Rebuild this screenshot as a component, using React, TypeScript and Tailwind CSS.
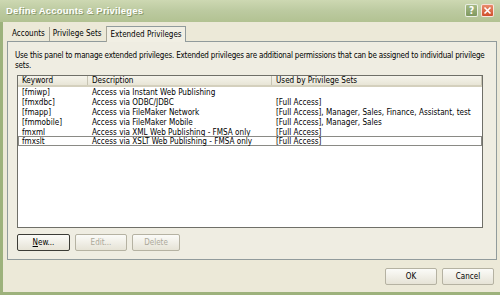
import React from "react";

const rows = [
  ["[fmiwp]", "Access via Instant Web Publishing", ""],
  ["[fmxdbc]", "Access via ODBC/JDBC", "[Full Access]"],
  ["[fmapp]", "Access via FileMaker Network", "[Full Access], Manager, Sales, Finance, Assistant, test"],
  ["[fmmobile]", "Access via FileMaker Mobile", "[Full Access], Manager, Sales"],
  ["fmxml", "Access via XML Web Publishing - FMSA only", "[Full Access]"],
  ["fmxslt", "Access via XSLT Web Publishing - FMSA only", "[Full Access]"],
];

function Btn({ label, w, disabled, def, u }: { label: string; w: string; disabled?: boolean; def?: boolean; u?: number }) {
  const text =
    u !== undefined ? (
      <>
        {label.slice(0, u)}
        <span className="underline">{label[u]}</span>
        {label.slice(u + 1)}
      </>
    ) : (
      label
    );
  return (
    <div
      className={
        "h-[17px] flex items-center justify-center rounded-[2px] text-[8px] bg-gradient-to-b from-[#fbfbf8] to-[#e6e3d6] " +
        w +
        " " +
        (def ? "border border-[#3c3c36] " : "border border-[#b5b2a2] ") +
        (disabled ? "text-[#aca899]" : "text-black")
      }
    >
      {text}
    </div>
  );
}

export default function App() {
  return (
    <div className="w-[500px] h-[295px] flex flex-col bg-[#9db27c] font-['DejaVu_Sans_Condensed','DejaVu_Sans',sans-serif] overflow-hidden">
      <div className="h-[22px] shrink-0 flex items-center pl-[6px] pr-[6px] bg-gradient-to-b from-[#cdd8b2] via-[#bccaa0] to-[#b2c292]">
        <span className="text-[9.5px] font-bold text-white [text-shadow:1px_1px_0_#8a9a6c] font-['Liberation_Sans',Arial,sans-serif] tracking-[0.2px]">
          Define Accounts &amp; Privileges
        </span>
        <div className="ml-auto flex gap-[3px] mt-[-1px]">
          <div className="w-[13px] h-[13px] rounded-[2px] border border-white/80 bg-gradient-to-b from-[#a5ba85] to-[#7f9860] text-white text-[10px] font-bold flex items-center justify-center leading-none">
            ?
          </div>
          <div className="w-[13px] h-[13px] rounded-[2px] border border-white/80 bg-gradient-to-b from-[#e88a6a] to-[#cf4e2a] flex items-center justify-center">
            <svg width="9" height="9" viewBox="0 0 9 9">
              <path d="M1.5 1.5 L7.5 7.5 M7.5 1.5 L1.5 7.5" stroke="white" strokeWidth="1.6" />
            </svg>
          </div>
        </div>
      </div>
      <div className="flex-1 ml-[3px] mb-[3px] bg-[#ece9d8] flex flex-col">
        <div className="pt-[3px] pl-[4px] pr-[3px] flex flex-col">
          <div className="h-[16px] flex items-end text-[8px] text-black">
            <div className="h-[14px] flex items-center pl-[5px] pr-[4px] border-r border-[#a9a697]">Accounts</div>
            <div className="h-[14px] flex items-center pl-[3px] pr-[4px]">Privilege Sets</div>
            <div className="h-[16px] flex items-center pl-[4px] pr-[3px] border border-b-0 border-[#919b9c] border-l-[#a9a697] bg-[#f1efe4] relative top-[1px]">
              Extended Privileges
            </div>
          </div>
          <div className="h-[219px] border border-[#919b9c] bg-[#efede2] flex flex-col pl-[9px] pr-[13px]">
            <div className="pt-[9px] text-[8px] leading-[10px] tracking-[-0.2px] text-black ml-[-2px] mr-[-12px]">
              Use this panel to manage extended privileges. Extended privileges are additional permissions that can be assigned to individual privilege sets.
            </div>
            <div className="mt-[4px] h-[153px] border border-[#6f6f68] bg-white flex flex-col text-[8.1px] text-black">
              <div className="h-[11px] shrink-0 flex bg-gradient-to-b from-[#f5f4ec] to-[#e8e5d6] border-b-2 border-[#d4d0bd]">
                <div className="w-[70px] pl-[4px] flex items-center border-r border-[#c7c4b3]">Keyword</div>
                <div className="w-[184px] pl-[4px] flex items-center border-r border-[#c7c4b3]">Description</div>
                <div className="flex-1 pl-[4px] flex items-center border-r border-[#c7c4b3]">Used by Privilege Sets</div>
              </div>
              {rows.map((r, i) => (
                <div
                  key={i}
                  className={
                    "h-[10px] shrink-0 flex items-center " +
                    (i === 5 ? "border border-[#8a8a85] mt-[-1px]" : "border border-transparent")
                  }
                >
                  <div className="w-[70px] pl-[3px] leading-none">{r[0]}</div>
                  <div className="w-[184px] pl-[3px] leading-none">{r[1]}</div>
                  <div className="flex-1 pl-[3px] leading-none">{r[2]}</div>
                </div>
              ))}
            </div>
            <div className="mt-[6px] flex gap-[5px]">
              <Btn label="New..." w="w-[53px]" def u={0} />
              <Btn label="Edit..." w="w-[52px]" disabled />
              <Btn label="Delete" w="w-[48px]" disabled />
            </div>
          </div>
        </div>
        <div className="mt-[8px] flex justify-end gap-[5px] pr-[6px]">
          <Btn label="OK" w="w-[52px]" />
          <Btn label="Cancel" w="w-[52px]" />
        </div>
      </div>
    </div>
  );
}
